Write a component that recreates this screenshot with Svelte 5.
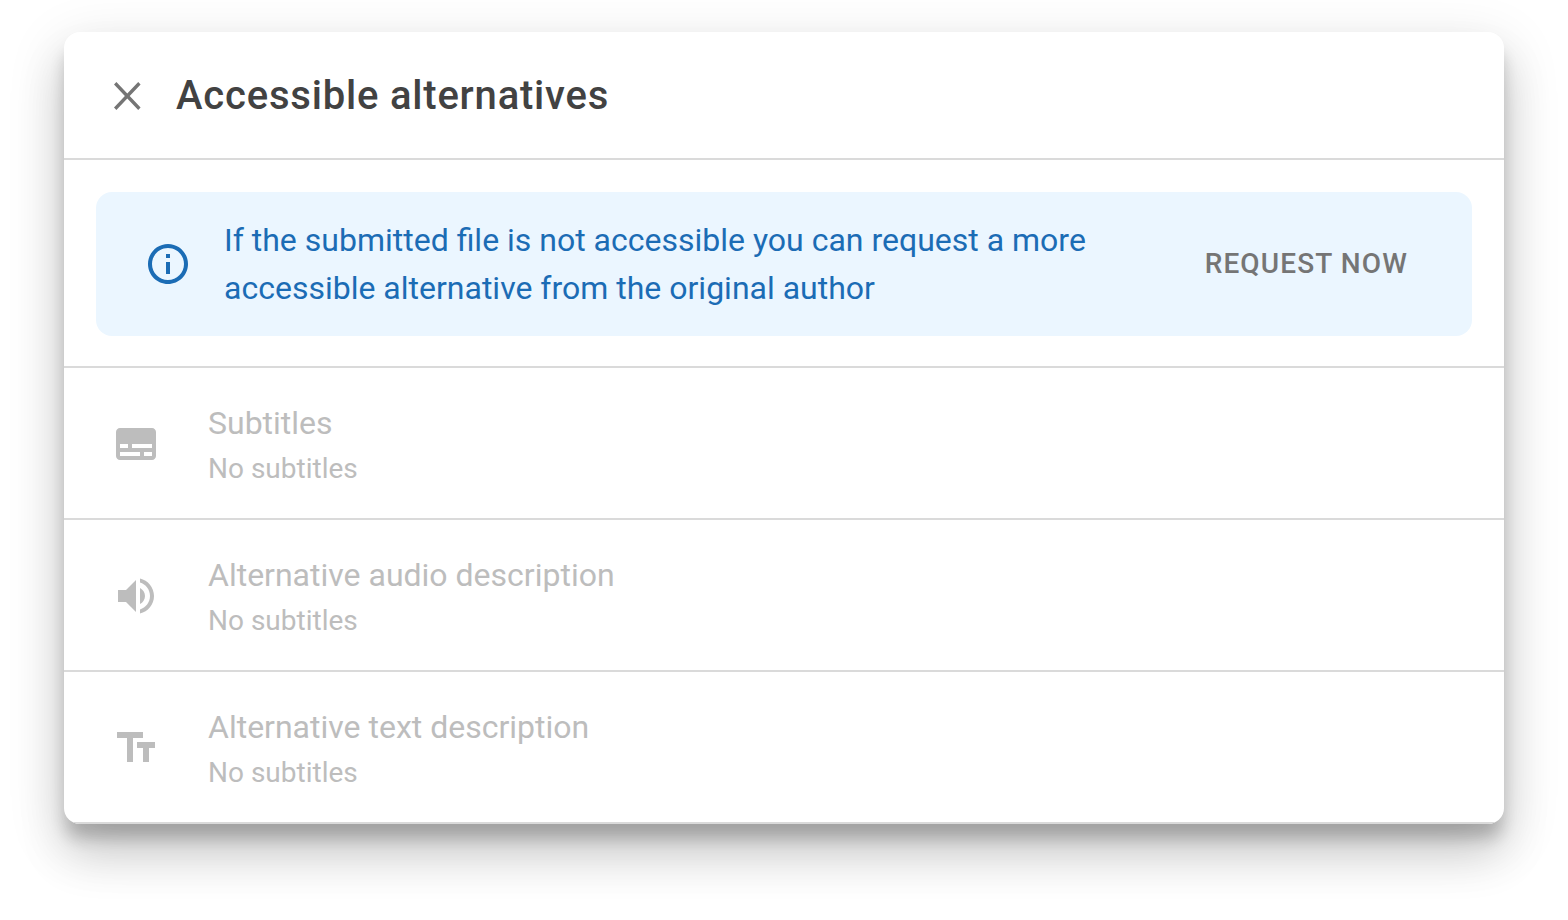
<script lang="ts">
    interface Alternative {
        icon: string;
        title: string;
        status: string;
    }

    let open = $state(true);

    const icons: Record<string, string> = {
        close: "M18.3 6.3 17.1 5 11.65 10.7 6.2 5 5 6.3 10.45 12 5 17.7 6.2 19 11.65 13.3 17.1 19 18.3 17.7 12.85 12z",
        info: "M11 7h2v2h-2zm0 4h2v6h-2zm1-9C6.48 2 2 6.48 2 12s4.48 10 10 10 10-4.48 10-10S17.52 2 12 2zm0 18c-4.41 0-8-3.59-8-8s3.59-8 8-8 8 3.59 8 8-3.59 8-8 8z",
        subtitles: "M20 4H4c-1.1 0-2 .9-2 2v12c0 1.1.9 2 2 2h16c1.1 0 2-.9 2-2V6c0-1.1-.9-2-2-2zM4 12h4v2H4v-2zm10 6H4v-2h10v2zm6 0h-4v-2h4v2zm0-4H10v-2h10v2z",
        audio: "M3 9v6h4l5 5V4L7 9H3zm13.5 3c0-1.77-1.02-3.29-2.5-4.03v8.05c1.48-.73 2.5-2.25 2.5-4.02zM14 3.23v2.06c2.89.86 5 3.54 5 6.71s-2.11 5.85-5 6.71v2.06c4.01-.91 7-4.49 7-8.77s-2.99-7.86-7-8.77z",
        text: "M2.5 4v3h5v12h3V7h5V4h-13zm19 5h-9v3h3v7h3v-7h3V9z"
    };

    const alternatives: Alternative[] = [
        { icon: "subtitles", title: "Subtitles", status: "No subtitles" },
        { icon: "audio", title: "Alternative audio description", status: "No subtitles" },
        { icon: "text", title: "Alternative text description", status: "No subtitles" }
    ];
</script>

{#snippet icon(name: string)}
    <svg class="icon" viewBox="0 0 24 24" aria-hidden="true">
        <path d={icons[name]} />
    </svg>
{/snippet}

{#if open}
    <div class="dialog" role="dialog" aria-labelledby="dialog-title">
        <header class="dialog-header">
            <button class="close" type="button" aria-label="Close" onclick={() => (open = false)}>
                {@render icon("close")}
            </button>
            <h1 id="dialog-title">Accessible alternatives</h1>
        </header>

        <div class="notice-container">
            <div class="notice">
                {@render icon("info")}
                <p>If the submitted file is not accessible you can request a more accessible alternative from the original author</p>
                <button class="request" type="button">Request now</button>
            </div>
        </div>

        <ul class="alternatives">
            {#each alternatives as alternative}
                <li class="alternative">
                    {@render icon(alternative.icon)}
                    <div class="alternative-detail">
                        <div class="alternative-title">{alternative.title}</div>
                        <div class="alternative-status">{alternative.status}</div>
                    </div>
                </li>
            {/each}
        </ul>
    </div>
{/if}

<style>
    :global(body) {
        margin: 0;
        background: #fff;
        font-family: Roboto, sans-serif;
    }

    .dialog {
        margin: 32px 64px 96px;
        overflow: hidden;
        border-radius: 16px;
        background: #fff;
        box-shadow:
            0 16px 16px -2px rgba(0, 0, 0, 0.2),
            0 32px 48px 0 rgba(0, 0, 0, 0.14),
            0 16px 56px 4px rgba(0, 0, 0, 0.12);
    }

    .icon {
        display: block;
        flex: none;
        width: 48px;
        height: 48px;
        fill: currentColor;
    }

    button {
        padding: 0;
        border: 0;
        background: none;
        color: #757575;
        font-family: inherit;
        cursor: pointer;
    }

    .dialog-header {
        display: flex;
        align-items: center;
        gap: 24px;
        padding: 32px 40px 30px;
        border-bottom: 2px solid #dadada;
    }

    h1 {
        margin: 0;
        color: #424242;
        font-size: 40px;
        font-weight: 500;
        line-height: 64px;
        letter-spacing: 0.02em;
    }

    .notice-container {
        padding: 32px 32px 30px;
        border-bottom: 2px solid #dadada;
    }

    .notice {
        display: flex;
        align-items: center;
        padding: 24px 48px;
        border-radius: 16px;
        background: #ebf6ff;
        color: #1b6cb5;
    }

    .notice p {
        flex: 1;
        margin: 0 32px;
        max-width: 900px;
        font-size: 32px;
        line-height: 48px;
    }

    .request {
        margin-left: auto;
        padding: 16px;
        font-size: 28px;
        font-weight: 500;
        line-height: 32px;
        letter-spacing: 0.04em;
        text-transform: uppercase;
    }

    .alternatives {
        margin: 0;
        padding: 0;
        list-style: none;
    }

    .alternative {
        display: flex;
        align-items: center;
        gap: 48px;
        padding: 30px 48px 28px;
        border-bottom: 2px solid #dadada;
        color: #bdbdbd;
    }

    .alternative-title {
        font-size: 32px;
        line-height: 50px;
    }

    .alternative-status {
        font-size: 28px;
        line-height: 42px;
    }
</style>
